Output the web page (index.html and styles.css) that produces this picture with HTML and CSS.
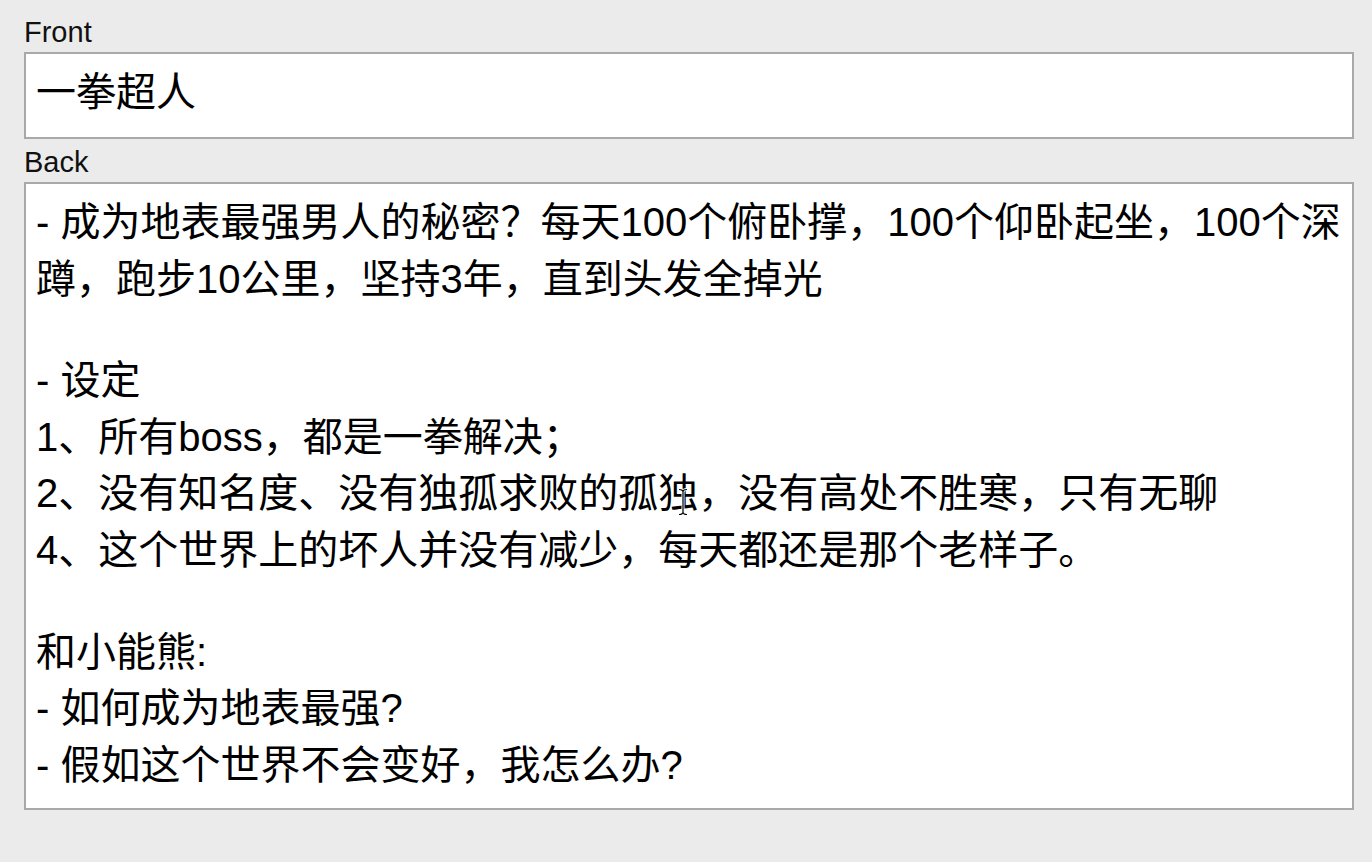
FILE: index.html
```html
<!DOCTYPE html>
<html lang="zh">
<head>
<meta charset="utf-8">
<title>Card</title>
<link rel="stylesheet" href="styles.css">
</head>
<body>
<div class="page">
  <div class="label label-first">Front</div>
  <div class="field field-front">
    <div class="line">一拳超人</div>
  </div>
  <div class="label">Back</div>
  <div class="field field-back">
    <div class="line">- 成为地表最强男人的秘密？每天100个俯卧撑，100个仰卧起坐，100个深蹲，跑步10公里，坚持3年，直到头发全掉光</div>
    <div class="blank"><br></div>
    <div class="line">- 设定</div>
    <div class="line">1、所有boss，都是一拳解决；</div>
    <div class="line">2、没有知名度、没有独孤求败的孤独，没有高处不胜寒，只有无聊</div>
    <div class="line">4、这个世界上的坏人并没有减少，每天都还是那个老样子。</div>
    <div class="blank"><br></div>
    <div class="line">和小能熊:</div>
    <div class="line">- 如何成为地表最强?</div>
    <div class="line">- 假如这个世界不会变好，我怎么办?</div>
    <svg class="ibeam" width="10" height="28" viewBox="0 0 10 28" aria-hidden="true">
      <path d="M1 1.5 Q5 1.5 5 4 Q5 1.5 9 1.5 M5 4 V24 M1 26.5 Q5 26.5 5 24 Q5 26.5 9 26.5" fill="none" stroke="#fff" stroke-width="3"/>
      <path d="M1 1.5 Q5 1.5 5 4 Q5 1.5 9 1.5 M5 4 V24 M1 26.5 Q5 26.5 5 24 Q5 26.5 9 26.5" fill="none" stroke="#000" stroke-width="1.2"/>
    </svg>
  </div>
</div>
</body>
</html>
```
FILE: styles.css
```css
html, body {
  margin: 0;
  padding: 0;
  background: #ebebeb;
}

body {
  font-family: "Liberation Sans", "Noto Sans CJK SC", sans-serif;
  color: #000;
}

.page {
  padding: 15px 18px 0 24px;
}

.label {
  font-size: 29px;
  line-height: 34px;
  margin: 6px 0 3px 0;
  color: #111;
}

.label-first {
  margin-top: 0;
}

.field {
  position: relative;
  background: #fff;
  border: 2px solid #a9a9a9;
  padding: 10px 8px 15px 10px;
  font-size: 40px;
  line-height: 56.5px;
}

.field-front {
  padding-bottom: 16.5px;
}

.line {
  line-height: 56.5px;
}

.blank {
  line-height: 45.3px;
  height: 45.3px;
}

.ibeam {
  position: absolute;
  left: 652px;
  top: 304px;
}
```
